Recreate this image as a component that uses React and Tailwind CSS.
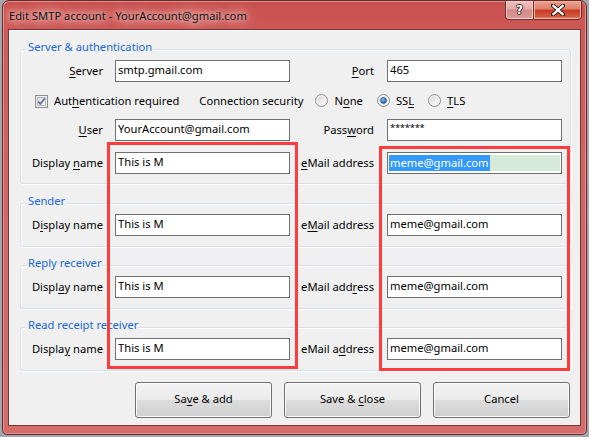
import React from "react";

function U({ children }) {
  return <span className="underline underline-offset-[2px] decoration-[1px]">{children}</span>;
}

function Field({ children, className = "" }) {
  return (
    <div className={`h-[22px] border border-[#6f6f6f] bg-white flex items-center pl-[2px] pb-[1px] whitespace-nowrap ${className}`}>
      {children}
    </div>
  );
}

function Row({ label1, value1, label2, value2 }) {
  return (
    <div className="flex items-center h-[22px]">
      <div className="w-[82px] text-right whitespace-nowrap">{label1}</div>
      <Field className="ml-[12px] w-[175px]">{value1}</Field>
      <div className="w-[84px] text-right whitespace-nowrap">{label2}</div>
      {value2}
    </div>
  );
}

function Group({ title, className = "", children }) {
  return (
    <div className={`relative border border-[#d5dfe5] rounded-[3px] shadow-[inset_1px_1px_0_#ffffff,1px_1px_0_#ffffff] ${className}`}>
      <span className="absolute left-[6px] -top-[11px] px-[1px] bg-[#f0f0f0] leading-[16px] text-[#1769d4] whitespace-nowrap">
        {title}
      </span>
      {children}
    </div>
  );
}

function Checkbox() {
  return (
    <svg width="13" height="13" viewBox="0 0 13 13" className="shrink-0">
      <defs>
        <linearGradient id="cbg" x1="0" y1="0" x2="1" y2="1">
          <stop offset="0" stopColor="#dcdcdc" />
          <stop offset="1" stopColor="#fbfbfb" />
        </linearGradient>
      </defs>
      <rect x="0.5" y="0.5" width="12" height="12" fill="#f4f4f4" stroke="#8f8f8f" />
      <rect x="2.5" y="2.5" width="8" height="8" fill="url(#cbg)" stroke="#b8b8b8" />
      <path d="M3.2 6.6 L5.3 8.9 L9.8 3.4" fill="none" stroke="#6479a3" strokeWidth="1.8" />
    </svg>
  );
}

function Radio({ checked }) {
  return (
    <svg width="13" height="13" viewBox="0 0 13 13" className="shrink-0">
      <defs>
        <linearGradient id="rbg" x1="0" y1="0" x2="1" y2="1">
          <stop offset="0" stopColor="#d6d6d6" />
          <stop offset="1" stopColor="#fdfdfd" />
        </linearGradient>
        <radialGradient id="rdot" cx="0.4" cy="0.35" r="0.7">
          <stop offset="0" stopColor="#7fc0f3" />
          <stop offset="1" stopColor="#1a4f9c" />
        </radialGradient>
      </defs>
      <circle cx="6.5" cy="6.5" r="6" fill="#f4f4f4" stroke="#8c8c8c" />
      <circle cx="6.5" cy="6.5" r="4.2" fill="url(#rbg)" />
      {checked && <circle cx="6.5" cy="6.5" r="3" fill="url(#rdot)" stroke="#1f4a86" strokeWidth="0.6" />}
    </svg>
  );
}

function Button({ children }) {
  return (
    <button className="w-[137px] h-[36px] rounded-[3px] border border-[#707070] bg-[linear-gradient(to_bottom,#f2f2f2_0%,#ebebeb_50%,#dddddd_51%,#cfcfcf_100%)] shadow-[inset_0_0_0_1px_#fbfbfb] text-black pb-[1px]">
      {children}
    </button>
  );
}

function TitleBar() {
  return (
    <div className="h-[28px] flex items-start justify-between shrink-0">
      <div className="pl-[1px] pt-[7px] leading-[16px] text-[#111] whitespace-nowrap [text-shadow:0_0_5px_#f5d2d1,0_0_9px_#f0c0bf,0_0_13px_#ebb1b0,0_0_17px_#e8a7a6,0_0_22px_#e6a2a1]">
        Edit SMTP account - YourAccount@gmail.com
      </div>
      <div className="flex -mt-[1px] -mr-[1px]">
        <div className="w-[28px] h-[20px] border border-[#6d3131] border-r-0 rounded-bl-[4px] bg-[linear-gradient(to_bottom,#eec1c0_0%,#e4a9a8_45%,#d48887_50%,#dc9a98_100%)] flex items-center justify-center shadow-[inset_0_0_0_1px_#f3cfce]">
          <span className="font-['DejaVu_Sans',sans-serif] font-bold text-[12px] leading-[12px] text-white [text-shadow:1px_0_0_#4a2a2a,-1px_0_0_#4a2a2a,0_1px_0_#4a2a2a,0_-1px_0_#4a2a2a]">?</span>
        </div>
        <div className="w-[49px] h-[20px] border border-[#6d2a22] rounded-br-[4px] bg-[linear-gradient(to_bottom,#eaa393_0%,#df7d68_45%,#c73a1f_50%,#d25a40_85%,#e08a6f_100%)] flex items-center justify-center shadow-[inset_0_0_0_1px_#f0b4a6]">
          <svg width="14" height="12" viewBox="0 0 14 12">
            <path d="M2 1.5 L12 10.5 M12 1.5 L2 10.5" stroke="#3b1a16" strokeWidth="4.2" strokeLinecap="square" />
            <path d="M2.4 1.9 L11.6 10.1 M11.6 1.9 L2.4 10.1" stroke="#ffffff" strokeWidth="2.2" strokeLinecap="square" />
          </svg>
        </div>
      </div>
    </div>
  );
}

function EmailField({ selected }) {
  if (selected) {
    return (
      <div className="ml-[13px] w-[175px] h-[22px] border border-[#6f6f6f] bg-white flex items-start pt-[2px] px-[1px]">
        <div className="flex-1 h-[16px] bg-[#d5eadb] flex">
          <span className="bg-[#3399ff] text-white leading-[16px] pl-[1px] pr-[1px] whitespace-nowrap">meme@gmail.com</span>
        </div>
      </div>
    );
  }
  return <Field className="ml-[13px] w-[175px]">meme@gmail.com</Field>;
}

function Recipient({ title, dn, em, className }) {
  return (
    <Group title={title} className={`pt-[10px] pb-[10px] ${className}`}>
      <Row label1={dn} value1="This is M" label2={em} value2={<EmailField />} />
    </Group>
  );
}

export default function App() {
  return (
    <div className="relative w-[589px] h-[437px] overflow-hidden bg-[#a4a7ad] font-['Noto_Sans',sans-serif] text-[11.2px] text-black">
      <div className="ml-[2px] w-[585px] h-[435px] flex flex-col rounded-t-[7px] rounded-b-[5px] border border-[#5e2b2b] bg-[linear-gradient(to_bottom,#c94f4d,#cd5b59_8%,#d36866_60%,#d46b69)] px-[5px] pb-[8px] shadow-[inset_0_0_0_1px_#e79391]">
        <TitleBar />
        <div className="flex-1 flex flex-col border border-[#7a3434] bg-[#f0f0f0] shadow-[inset_1px_1px_0_#ffffff] pl-[11px] pr-[9px] pt-[19px]">
          <Group title="Server & authentication" className="pt-[10px] pb-[9px]">
            <Row
              label1={<><U>S</U>erver</>}
              value1="smtp.gmail.com"
              label2={<><U>P</U>ort</>}
              value2={<Field className="ml-[13px] w-[175px]">465</Field>}
            />
            <div className="flex items-center h-[22px] mt-[8px]">
              <div className="ml-[14px]">
                <Checkbox />
              </div>
              <span className="ml-[6px] whitespace-nowrap">
                Aut<U>h</U>entication required
              </span>
              <span className="ml-[20px] whitespace-nowrap">Connection security</span>
              <div className="ml-[12px] flex items-center">
                <Radio />
                <span className="ml-[6px]">
                  N<U>o</U>ne
                </span>
              </div>
              <div className="ml-[14px] flex items-center">
                <Radio checked />
                <span className="ml-[6px]">
                  SS<U>L</U>
                </span>
              </div>
              <div className="ml-[14px] flex items-center">
                <Radio />
                <span className="ml-[6px]">
                  <U>T</U>LS
                </span>
              </div>
            </div>
            <div className="mt-[7px]">
              <Row
                label1={<><U>U</U>ser</>}
                value1="YourAccount@gmail.com"
                label2={<>Pass<U>w</U>ord</>}
                value2={
                  <Field className="ml-[13px] w-[175px] items-start pt-[1px] text-[9.5px] tracking-[-0.3px]">
                    *******
                  </Field>
                }
              />
            </div>
            <div className="mt-[11px]">
              <Row
                label1={<>Display <U>n</U>ame</>}
                value1="This is M"
                label2={<><U>e</U>Mail address</>}
                value2={<EmailField selected />}
              />
            </div>
          </Group>

          <Recipient
            title="Sender"
            className="mt-[19px]"
            dn={<>D<U>i</U>splay name</>}
            em={<>e<U>M</U>ail address</>}
          />
          <Recipient
            title="Reply receiver"
            className="mt-[18px]"
            dn={<>Displ<U>a</U>y name</>}
            em={<>eMail add<U>r</U>ess</>}
          />
          <Recipient
            title="Read receipt receiver"
            className="mt-[18px]"
            dn={<>Displa<U>y</U> name</>}
            em={<>eMail a<U>d</U>dress</>}
          />

          <div className="mt-[11px] flex justify-end gap-[12px] mr-[1px]">
            <Button>
              Sa<U>v</U>e &amp; add
            </Button>
            <Button>
              Save &amp; <U>c</U>lose
            </Button>
            <Button>Cancel</Button>
          </div>
        </div>
      </div>

      <div className="absolute left-[107px] top-[142px] w-[191px] h-[227px] border-[3px] border-[#ff3b3b]" />
      <div className="absolute left-[379px] top-[146px] w-[191px] h-[225px] border-[3px] border-[#ff3b3b]" />
    </div>
  );
}
